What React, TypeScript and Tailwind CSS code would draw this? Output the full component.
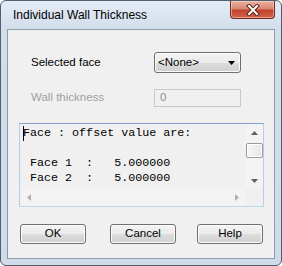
import React from 'react';

const bevel =
  'bg-[linear-gradient(to_bottom,#f3f3f3_0%,#ebebeb_50%,#dddddd_50%,#d0d0d0_100%)] shadow-[inset_0_0_0_1px_#fbfbfb]';

const lines = ['Face : offset value are:', '', ' Face 1  :   5.000000', ' Face 2  :   5.000000'];

const Tri = ({ dir, color }: { dir: 'up' | 'down' | 'left' | 'right'; color: string }) => {
  const pts = {
    up: '0,4 7,4 3.5,0',
    down: '0,0 7,0 3.5,4',
    left: '4,0 4,7 0,3.5',
    right: '0,0 0,7 4,3.5',
  }[dir];
  const vertical = dir === 'up' || dir === 'down';
  return (
    <svg width={vertical ? 7 : 4} height={vertical ? 4 : 7} viewBox={vertical ? '0 0 7 4' : '0 0 4 7'}>
      <polygon points={pts} fill={color} />
    </svg>
  );
};

const Button = ({ label, className = '' }: { label: string; className?: string }) => (
  <div
    className={`flex h-[20px] w-[66px] items-center justify-center rounded-[3px] border border-[#707070] text-[11.5px] text-black ${bevel} ${className}`}
  >
    {label}
  </div>
);

const App = () => {
  return (
    <div className="relative flex h-[266px] w-[282px] flex-col rounded-[6px] border border-[#4f5e70] bg-[linear-gradient(to_bottom,#e3ebf5,#d3deeb_28px,#cfdbe9)] px-[6px] pb-[6px] font-['Liberation_Sans',Arial,sans-serif]">
      <div className="flex h-[28px] items-center pl-[6px] text-[12px] text-black">Individual Wall Thickness</div>

      {/* close button */}
      <div className="absolute right-[6px] top-0 flex h-[18px] w-[45px] items-center justify-center rounded-b-[4px] border border-t-0 border-[#6b2d22] bg-[linear-gradient(to_bottom,#ebb3a4_0%,#d98671_45%,#c2432c_55%,#d2634a_100%)] shadow-[inset_0_0_0_1px_rgba(255,220,210,0.5)]">
        <svg width="14" height="12" viewBox="0 0 14 12">
          <path d="M3 2 L11 10 M11 2 L3 10" stroke="#5a2418" strokeWidth="4" strokeLinecap="square" />
          <path d="M3 2 L11 10 M11 2 L3 10" stroke="#ffffff" strokeWidth="2" strokeLinecap="square" />
        </svg>
      </div>

      <div className="flex-1 border border-[#8e9bab] bg-[#f0f0f0] pt-[22px] text-[11.5px]">
        <div className="flex h-[21px] items-center">
          <div className="w-[146px] pl-[23px] text-black">Selected face</div>
          <div
            className={`flex h-[21px] w-[87px] items-center justify-between rounded-[3px] border border-[#707070] pl-[3px] pr-[5px] text-black ${bevel}`}
          >
            <span>&lt;None&gt;</span>
            <Tri dir="down" color="#000000" />
          </div>
        </div>

        <div className="mt-[16px] flex h-[18px] items-center">
          <div className="w-[146px] pl-[23px] text-[#a0a0a0]">Wall thickness</div>
          <div className="flex h-[18px] w-[87px] items-center border border-[#c9c9c9] bg-[#f0f0f0] pl-[5px] text-[#8d8d8d]">
            0
          </div>
        </div>

        <div className="ml-[11px] mt-[16px] flex h-[84px] w-[245px] flex-col border border-[#b5cfe7] border-t-[#7da2ce] border-b-[#b7d9ed]">
          <div className="flex h-[65px]">
            <div className="relative flex-1 overflow-hidden bg-[#f0f0f0] pl-[3px] pt-[2px] font-['Liberation_Mono','Courier_New',monospace] text-[11.7px] leading-[15px] text-black">
              <span className="absolute left-[3px] top-[2px] h-[15px] border-l border-black" />
              {lines.map((l, i) => (
                <div key={i} className="h-[15px] whitespace-pre">
                  {l}
                </div>
              ))}
            </div>
            <div className="flex w-[17px] flex-col bg-[#f3f3f3]">
              <div className="flex h-[17px] items-center justify-center">
                <Tri dir="up" color="#5e5e5e" />
              </div>
              <div className="mt-[2px] h-[15px] rounded-[2px] border border-[#9a9a9a] bg-[linear-gradient(to_right,#f7f7f7,#e6e6e6)] shadow-[inset_0_0_0_1px_#ffffff]" />
              <div className="flex-1" />
              <div className="flex h-[17px] items-center justify-center">
                <Tri dir="down" color="#5e5e5e" />
              </div>
            </div>
          </div>
          <div className="flex h-[17px]">
            <div className="flex flex-1 items-center justify-between bg-[#f3f3f3] px-[7px]">
              <Tri dir="left" color="#b0b0b0" />
              <Tri dir="right" color="#b0b0b0" />
            </div>
            <div className="w-[17px] bg-[#f0f0f0]" />
          </div>
        </div>

        <div className="mt-[17px] flex pl-[12px]">
          <Button label="OK" />
          <Button label="Cancel" className="ml-[24px]" />
          <Button label="Help" className="ml-[21px]" />
        </div>
      </div>
    </div>
  );
};

export default App;
